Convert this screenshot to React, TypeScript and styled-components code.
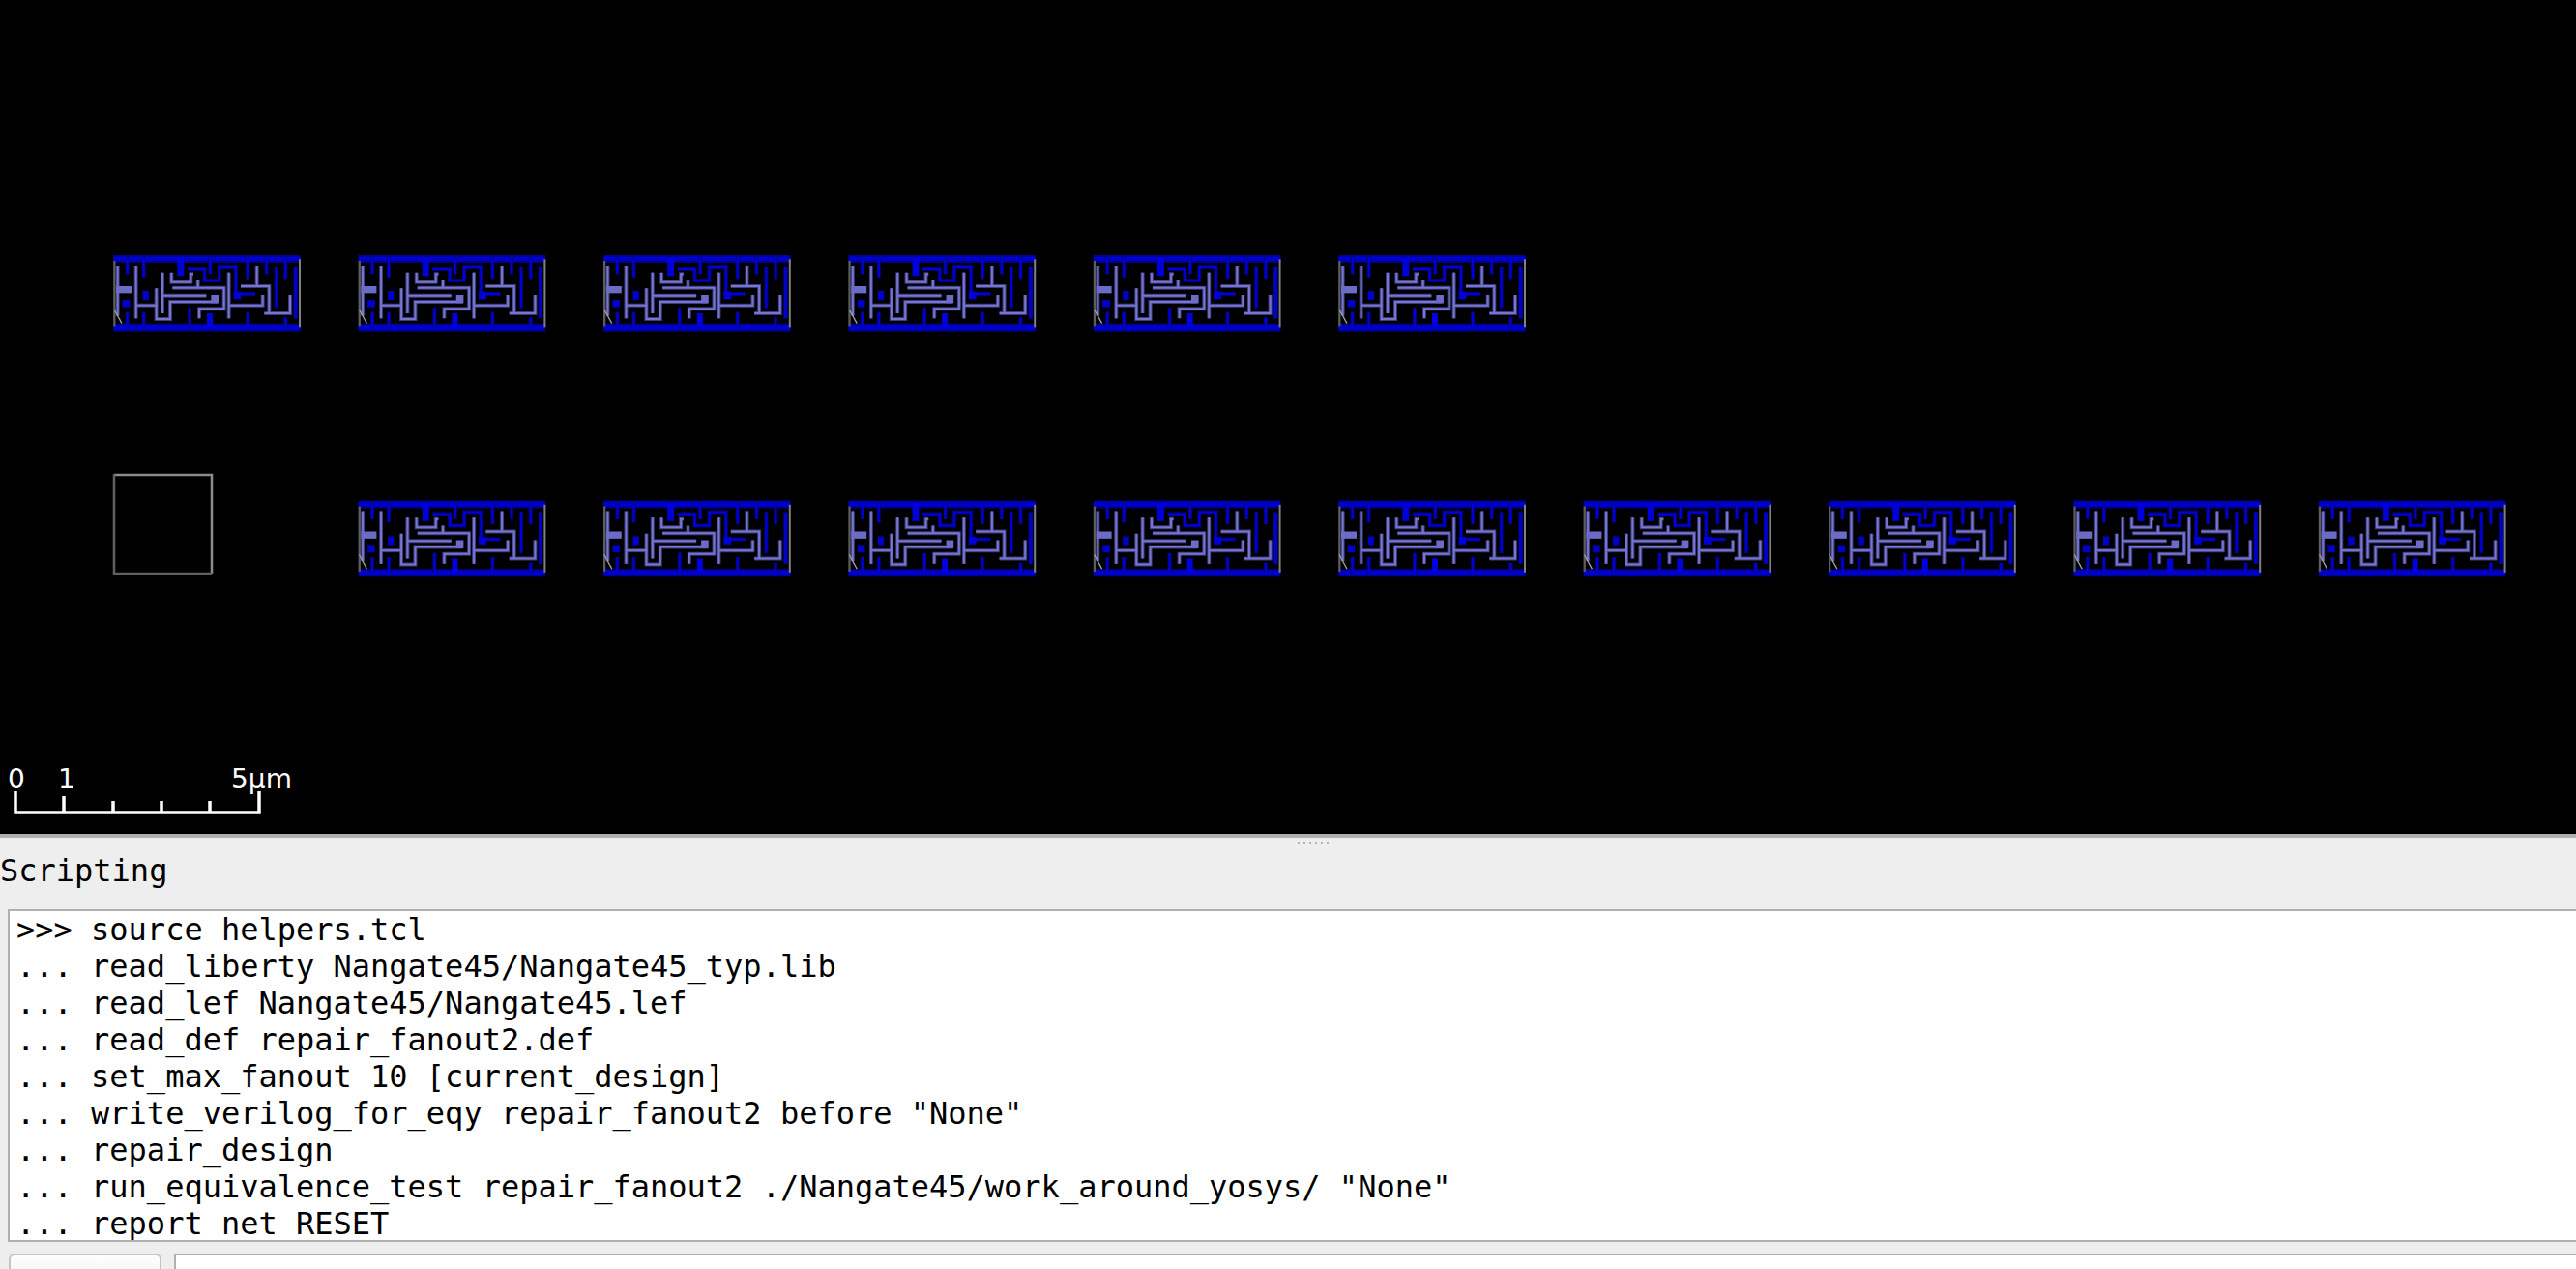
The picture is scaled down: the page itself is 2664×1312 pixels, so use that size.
import React from "react";
import styled, { createGlobalStyle } from "styled-components";

const consoleLines = [
  ">>> source helpers.tcl",
  "... read_liberty Nangate45/Nangate45_typ.lib",
  "... read_lef Nangate45/Nangate45.lef",
  "... read_def repair_fanout2.def",
  "... set_max_fanout 10 [current_design]",
  '... write_verilog_for_eqy repair_fanout2 before "None"',
  "... repair_design",
  '... run_equivalence_test repair_fanout2 ./Nangate45/work_around_yosys/ "None"',
  "... report_net RESET",
];

const CELL_PITCH = 253.4;
const ROW_PITCH = 253.5;

// which slots of the placement grid hold a buffer cell
const placedCells = [
  ...[0, 1, 2, 3, 4, 5].map((col) => ({ col, row: 0 })),
  ...[1, 2, 3, 4, 5, 6, 7, 8, 9].map((col) => ({ col, row: 1 })),
];

// drawn in 3x units, see the scale(1 / 3) where it gets placed
const metalStubs = [
  "M95 50V100", "M146 50V110", "M352 50V100", "M468 50V115", "M527 50V100", "M586 50V115",
  "M95 265V218", "M146 265V218", "M288 265V205", "M468 265V218", "M586 265V235",
  "M557 78V205", "M282 84H335V120H380V78H432V170", "M432 162H492",
];

const poly = [
  "M65 75V230", "M122 75V238", "M122 197H188", "M185 145V240H228V186H375",
  "M204 95V222", "M204 167H340", "M235 143H395V208H318V238", "M314 120V143",
  "M232 95V125H292V100H300", "M410 95V238", "M410 197H515V165",
  "M447 138H535V222H520M520 222H600V165", "M497 75V138",
];

const CellArt = () => (
  <g id="buf-cell">
    <rect x="52" y="42" width="580" height="24" fill="#000090" />
    <rect x="52" y="47" width="580" height="13" fill="#0000cc" />
    <rect x="52" y="254" width="580" height="24" fill="#000090" />
    <rect x="52" y="259" width="580" height="13" fill="#0000cc" />
    <g fill="none" stroke="#00007c" strokeWidth="12">
      {metalStubs.map((d) => (
        <path key={d} d={d} />
      ))}
    </g>
    <g fill="none" stroke="#0000d8" strokeWidth="6">
      {metalStubs.map((d) => (
        <path key={d} d={d} />
      ))}
    </g>
    <rect x="250" y="50" width="21" height="56" fill="#0000d8" />
    <rect x="342" y="222" width="18" height="40" fill="#0000e0" />
    <rect x="611" y="78" width="12" height="160" fill="#0000c8" />
    <rect x="143" y="153" width="19" height="27" fill="#0000c8" />
    <rect x="80" y="180" width="23" height="23" fill="#0000c8" />
    <rect x="425" y="155" width="23" height="23" fill="#0000d8" />
    <g fill="none" stroke="#3a3a7c" strokeWidth="12">
      {poly.map((d) => (
        <path key={d} d={d} />
      ))}
    </g>
    <g fill="none" stroke="#7676d0" strokeWidth="6">
      {poly.map((d) => (
        <path key={d} d={d} />
      ))}
    </g>
    <rect x="60" y="138" width="48" height="22" fill="#6c6cc8" />
    <rect x="355" y="165" width="23" height="25" fill="#6c6cc8" />
    <path d="M55 60V262" stroke="#5c5c5c" strokeWidth="7" />
    <path d="M630 55V265" stroke="#808080" strokeWidth="6" />
    <path d="M54 210L78 254" stroke="#a0a0a0" strokeWidth="4" fill="none" />
  </g>
);

const App: React.FC = () => {
  return (
    <>
      <GlobalStyle />
      <StyledWindow>
        <StyledCanvas>
          <svg width="2664" height="862" viewBox="0 0 2664 862">
            <defs>
              <CellArt />
            </defs>
            {placedCells.map(({ col, row }) => (
              <use
                key={`${col}-${row}`}
                href="#buf-cell"
                transform={`translate(${col * CELL_PITCH + 100} ${row * ROW_PITCH + 250}) scale(${1 / 3})`}
              />
            ))}
            {/* the unplaced port block, its outline is lighter on the top and right */}
            <path d="M118 491H219V593" fill="none" stroke="#8c8c8c" strokeWidth="2.500" />
            <path d="M118 490V593H219" fill="none" stroke="#606060" strokeWidth="2.500" />
            <path
              d="M16 818V840H268V818M66 823V840M117 828V840M167 828V840M217 828V840"
              fill="none"
              stroke="#fff"
              strokeWidth="3.500"
            />
            <StyledScaleLabel x="8" y="815">0</StyledScaleLabel>
            <StyledScaleLabel x="60" y="815">1</StyledScaleLabel>
            <StyledScaleLabel x="239" y="815">5µm</StyledScaleLabel>
          </svg>
        </StyledCanvas>
        <StyledSplitter>
          <StyledGrip>
            {[0, 1, 2, 3, 4, 5].map((n) => (
              <StyledGripDot key={n} />
            ))}
          </StyledGrip>
        </StyledSplitter>
        <StyledDock>
          <StyledDockTitle>Scripting</StyledDockTitle>
          <StyledConsole>
            {consoleLines.map((line) => (
              <StyledConsoleLine key={line}>{line}</StyledConsoleLine>
            ))}
          </StyledConsole>
          <StyledInputRow>
            <StyledModeButton />
            <StyledCommandInput />
          </StyledInputRow>
        </StyledDock>
      </StyledWindow>
    </>
  );
};

const GlobalStyle = createGlobalStyle`
  html, body {
    margin: 0;
    padding: 0;
    background: #000;
  }
`;

const StyledWindow = styled.div`
  display: flex;
  flex-direction: column;
  height: 1312px;
  overflow: hidden;
  width: 2664px;
`;

const StyledCanvas = styled.div`
  background: #000;
  flex: 0 0 862px;
  svg {
    display: block;
  }
`;

const StyledScaleLabel = styled.text`
  fill: #fff;
  font-family: "DejaVu Sans", sans-serif;
  font-size: 28px;
`;

const StyledSplitter = styled.div`
  align-items: center;
  background: #eeeeee;
  border-top: 4px solid #b0b0b0;
  box-sizing: border-box;
  display: flex;
  flex: 0 0 20px;
  justify-content: center;
`;

const StyledGrip = styled.div`
  display: flex;
  gap: 4px;
  margin-left: 52px;
  margin-top: -4px;
`;

const StyledGripDot = styled.span`
  background: #b4b4b4;
  height: 2px;
  width: 2px;
`;

const StyledDock = styled.div`
  background: #eeeeee;
  display: flex;
  flex: 1;
  flex-direction: column;
  font-family: "DejaVu Sans Mono", monospace;
  font-size: 32px;
  min-height: 0;
`;

const StyledDockTitle = styled.div`
  color: #000;
  flex: 0 0 58px;
  line-height: 36px;
`;

const StyledConsole = styled.div`
  background: #fff;
  border: 2px solid #b0b0b0;
  border-right: 0;
  box-sizing: border-box;
  color: #000;
  flex: 0 0 344px;
  margin-left: 8px;
  overflow: hidden;
  padding-left: 7px;
`;

const StyledConsoleLine = styled.div`
  height: 38px;
  line-height: 38px;
  white-space: pre;
`;

const StyledInputRow = styled.div`
  display: flex;
  flex: 0 0 40px;
  gap: 13px;
  margin-top: 12px;
  padding-left: 9px;
`;

const StyledModeButton = styled.div`
  background: linear-gradient(#fdfdfd, #f2f2f2);
  border: 2px solid #c4c4c4;
  border-radius: 6px 6px 0 0;
  box-sizing: border-box;
  height: 40px;
  width: 158px;
`;

const StyledCommandInput = styled.div`
  background: #fff;
  border: 2px solid #b0b0b0;
  border-right: 0;
  box-sizing: border-box;
  flex: 1;
  height: 40px;
`;

export default App;
